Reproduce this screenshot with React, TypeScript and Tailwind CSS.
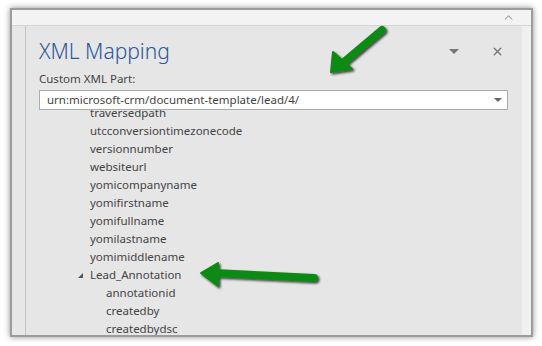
import { ChevronUp, X } from 'lucide-react'

const fields = [
  'traversedpath',
  'utcconversiontimezonecode',
  'versionnumber',
  'websiteurl',
  'yomicompanyname',
  'yomifirstname',
  'yomifullname',
  'yomilastname',
  'yomimiddlename',
]

const annotationFields = ['annotationid', 'createdby', 'createdbydsc', 'createdon']

const App = () => {
  return (
    <div className="relative h-[346px] w-[542px] overflow-hidden bg-white font-['Noto_Sans',sans-serif]">
      <div className="ml-[10px] mt-[8px] flex h-[329px] w-[523px] flex-col border-2 border-[#9c9c9c] shadow-[0_0_6px_rgba(0,0,0,0.45)]">
        {/* Ribbon collapse strip */}
        <div className="flex h-[16px] items-center justify-end border-b border-[#d5d5d5] bg-[#f3f3f3] pr-[16px]">
          <ChevronUp size={13} strokeWidth={1.2} className="text-[#444]" />
        </div>

        <div className="flex min-h-0 flex-1">
          {/* Left document margin */}
          <div className="w-[14px] border-r border-[#c4c4c4] bg-[#e7e7e7]" />

          {/* Task pane */}
          <div className="flex min-w-0 flex-1 flex-col bg-[#e6e6e6] pl-[13px] pr-[14px]">
            <div className="mt-[10px] flex h-[30px] items-center">
              <div className="flex-1 text-[21px] font-light leading-none text-[#2b579a]">
                XML Mapping
              </div>
              <div className="mr-[32px] h-0 w-0 border-x-[5px] border-t-[5px] border-x-transparent border-t-[#777]" />
              <X size={13} strokeWidth={2.6} className="mr-[4px] text-[#777]" />
            </div>

            <div className="mt-[5px] text-[11.5px] leading-[16px] text-[#444]">Custom XML Part:</div>

            <div className="mt-[3px] flex h-[20px] items-center border border-[#ababab] bg-white pl-[7px] pr-[5px]">
              <div className="flex-1 text-[11.5px] leading-none text-[#444]">
                urn:microsoft-crm/document-template/lead/4/
              </div>
              <div className="h-0 w-0 border-x-[4px] border-t-[4px] border-x-transparent border-t-[#666]" />
            </div>

            {/* Tree */}
            <div className="min-h-0 flex-1 overflow-hidden">
              <div className="-mt-[6px] flex flex-col text-[11.5px] text-[#444]">
                {fields.map((name) => (
                  <div key={name} className="flex h-[18px] items-center pl-[51px] leading-none">
                    {name}
                  </div>
                ))}
                <div className="flex h-[18px] items-center pl-[39px] leading-none">
                  <div className="mr-[7px] h-0 w-0 border-b-[5px] border-l-[5px] border-b-[#555] border-l-transparent" />
                  Lead_Annotation
                </div>
                {annotationFields.map((name) => (
                  <div key={name} className="flex h-[18px] items-center pl-[67px] leading-none">
                    {name}
                  </div>
                ))}
              </div>
            </div>
          </div>

          {/* Right margin */}
          <div className="w-[9px] bg-[#f0f0f0]" />
        </div>
      </div>

      {/* Green callout arrows */}
      <svg className="pointer-events-none absolute left-0 top-0" width="542" height="346">
        <defs>
          <filter id="sh" x="-20%" y="-20%" width="140%" height="140%">
            <feDropShadow dx="1.5" dy="1.5" stdDeviation="1" floodColor="#000" floodOpacity="0.75" />
          </filter>
        </defs>
        <g filter="url(#sh)" fill="#0e8a12" stroke="#0e8a12" strokeLinejoin="round" strokeLinecap="round">
          <line x1="382" y1="30" x2="344" y2="62" strokeWidth="8" />
          <polygon points="331,72 333,52 352,69" strokeWidth="2" />
          <line x1="314" y1="278" x2="214" y2="273" strokeWidth="8" />
          <polygon points="201,273 218,263 218,286" strokeWidth="2" />
        </g>
      </svg>
    </div>
  )
}

export default App
